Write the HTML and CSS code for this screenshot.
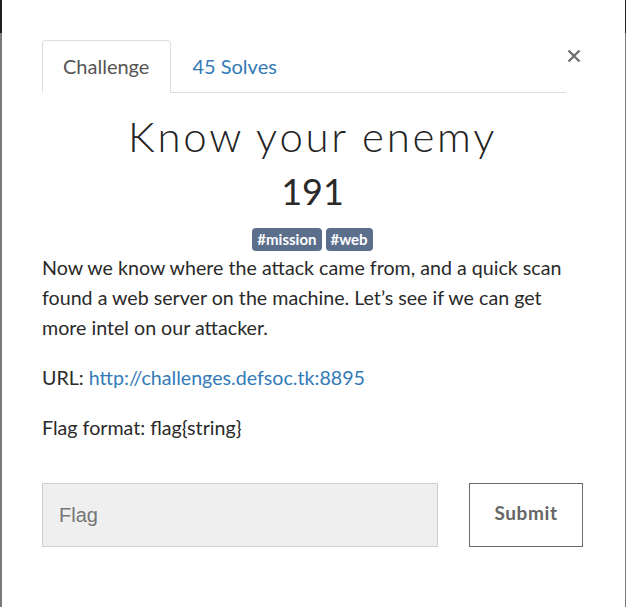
FILE: index.html
```html
<!DOCTYPE html>
<html>
<head>
<meta charset="utf-8">
<link rel="stylesheet" href="styles.css">
</head>
<body>
<div class="modal">
  <div class="modal-body">
    <div class="top-row">
      <ul class="nav-tabs">
        <li class="tab active">Challenge</li>
        <li class="tab link">45 Solves</li>
      </ul>
      <button class="close" aria-label="Close">
        <svg width="14" height="14" viewBox="0 0 14 14"><path d="M1.5 1.5L12.5 12.5M12.5 1.5L1.5 12.5" stroke="#6f6f6f" stroke-width="2.4" stroke-linecap="butt"/></svg>
      </button>
    </div>
    <h1 class="title">Know your enemy</h1>
    <div class="points">191</div>
    <div class="tags">
      <span class="tag">#mission</span>
      <span class="tag">#web</span>
    </div>
    <div class="description">
      <p>Now we know where the attack came from, and a quick scan found a web server on the machine. Let’s see if we can get more intel on our attacker.</p>
      <p>URL: <a href="#">http://challenges.defsoc.tk:8895</a></p>
      <p>Flag format: flag{string}</p>
    </div>
    <form class="submit-row">
      <input class="flag-input" type="text" placeholder="Flag">
      <button class="submit-btn" type="button">Submit</button>
    </form>
  </div>
</div>
</body>
</html>
```

FILE: styles.css
```css
html, body {
  margin: 0;
  padding: 0;
  height: 607px;
  overflow: hidden;
}
body {
  background: linear-gradient(to bottom, #1e1e1e 0, #1e1e1e 33px, #7a7a7a 33px, #7a7a7a 100%);
  font-family: Lato, "Noto Sans", sans-serif;
}
.modal {
  margin-left: 2px;
  width: 623px;
  height: 607px;
  background: #fff;
}
.modal-body {
  padding: 40px 42px 0 40px;
}
.top-row {
  display: flex;
  align-items: flex-start;
}
.nav-tabs {
  flex: 1;
  display: flex;
  list-style: none;
  margin: 0;
  padding: 0;
  border-bottom: 1px solid #dedede;
}
.tab {
  font-size: 20px;
  line-height: 25px;
  padding: 13px 21px 13px 20px;
  border: 1px solid transparent;
  border-bottom: none;
  border-radius: 4px 4px 0 0;
  margin-bottom: -1px;
}
.tab.active {
  color: #555;
  background: #fff;
  border-color: #dedede;
  padding-bottom: 14px;
}
.tab.link {
  color: #337ab7;
}
.close {
  background: none;
  border: none;
  padding: 0;
  margin: 9px 0 0 1px;
  width: 16px;
  height: 14px;
  display: flex;
  justify-content: flex-start;
}
.title {
  margin: 19px 0 0;
  text-align: center;
  font-weight: 300;
  font-size: 42px;
  line-height: 48px;
  letter-spacing: 2.7px;
  color: #222;
}
.points {
  margin-top: 10px;
  text-align: center;
  font-weight: 400;
  font-size: 36px;
  line-height: 43px;
  color: #2a2a2a;
}
.tags {
  margin-top: 15px;
  display: flex;
  justify-content: center;
  gap: 4px;
}
.tag {
  background: #5b6f8c;
  color: #fff;
  font-weight: 700;
  font-size: 15px;
  line-height: 23px;
  padding: 0 5px;
  border-radius: 4px;
}
.description {
  margin-top: 2px;
  color: #2a2a2a;
  font-size: 19.65px;
  line-height: 30px;
}
.description p {
  margin: 0 0 20px;
}
.description a {
  color: #337ab7;
  text-decoration: none;
}
.submit-row {
  margin: 40px 0 0;
  display: flex;
  gap: 31px;
}
.flag-input {
  flex: 1;
  box-sizing: border-box;
  height: 64px;
  margin: 0;
  background: #efefef;
  border: 1px solid #cfcfcf;
  padding: 0 16px;
  font-family: "Liberation Sans", Arial, sans-serif;
  font-size: 20px;
  color: #333;
  outline: none;
}
.flag-input::placeholder {
  color: #767676;
}
.submit-btn {
  box-sizing: border-box;
  width: 114px;
  height: 64px;
  margin: 0;
  padding: 0 0 5px;
  background: #fff;
  border: 1px solid #6b6b6b;
  font-family: Lato, "Noto Sans", sans-serif;
  font-weight: 700;
  font-size: 19px;
  letter-spacing: 0.6px;
  color: #666;
}
```
